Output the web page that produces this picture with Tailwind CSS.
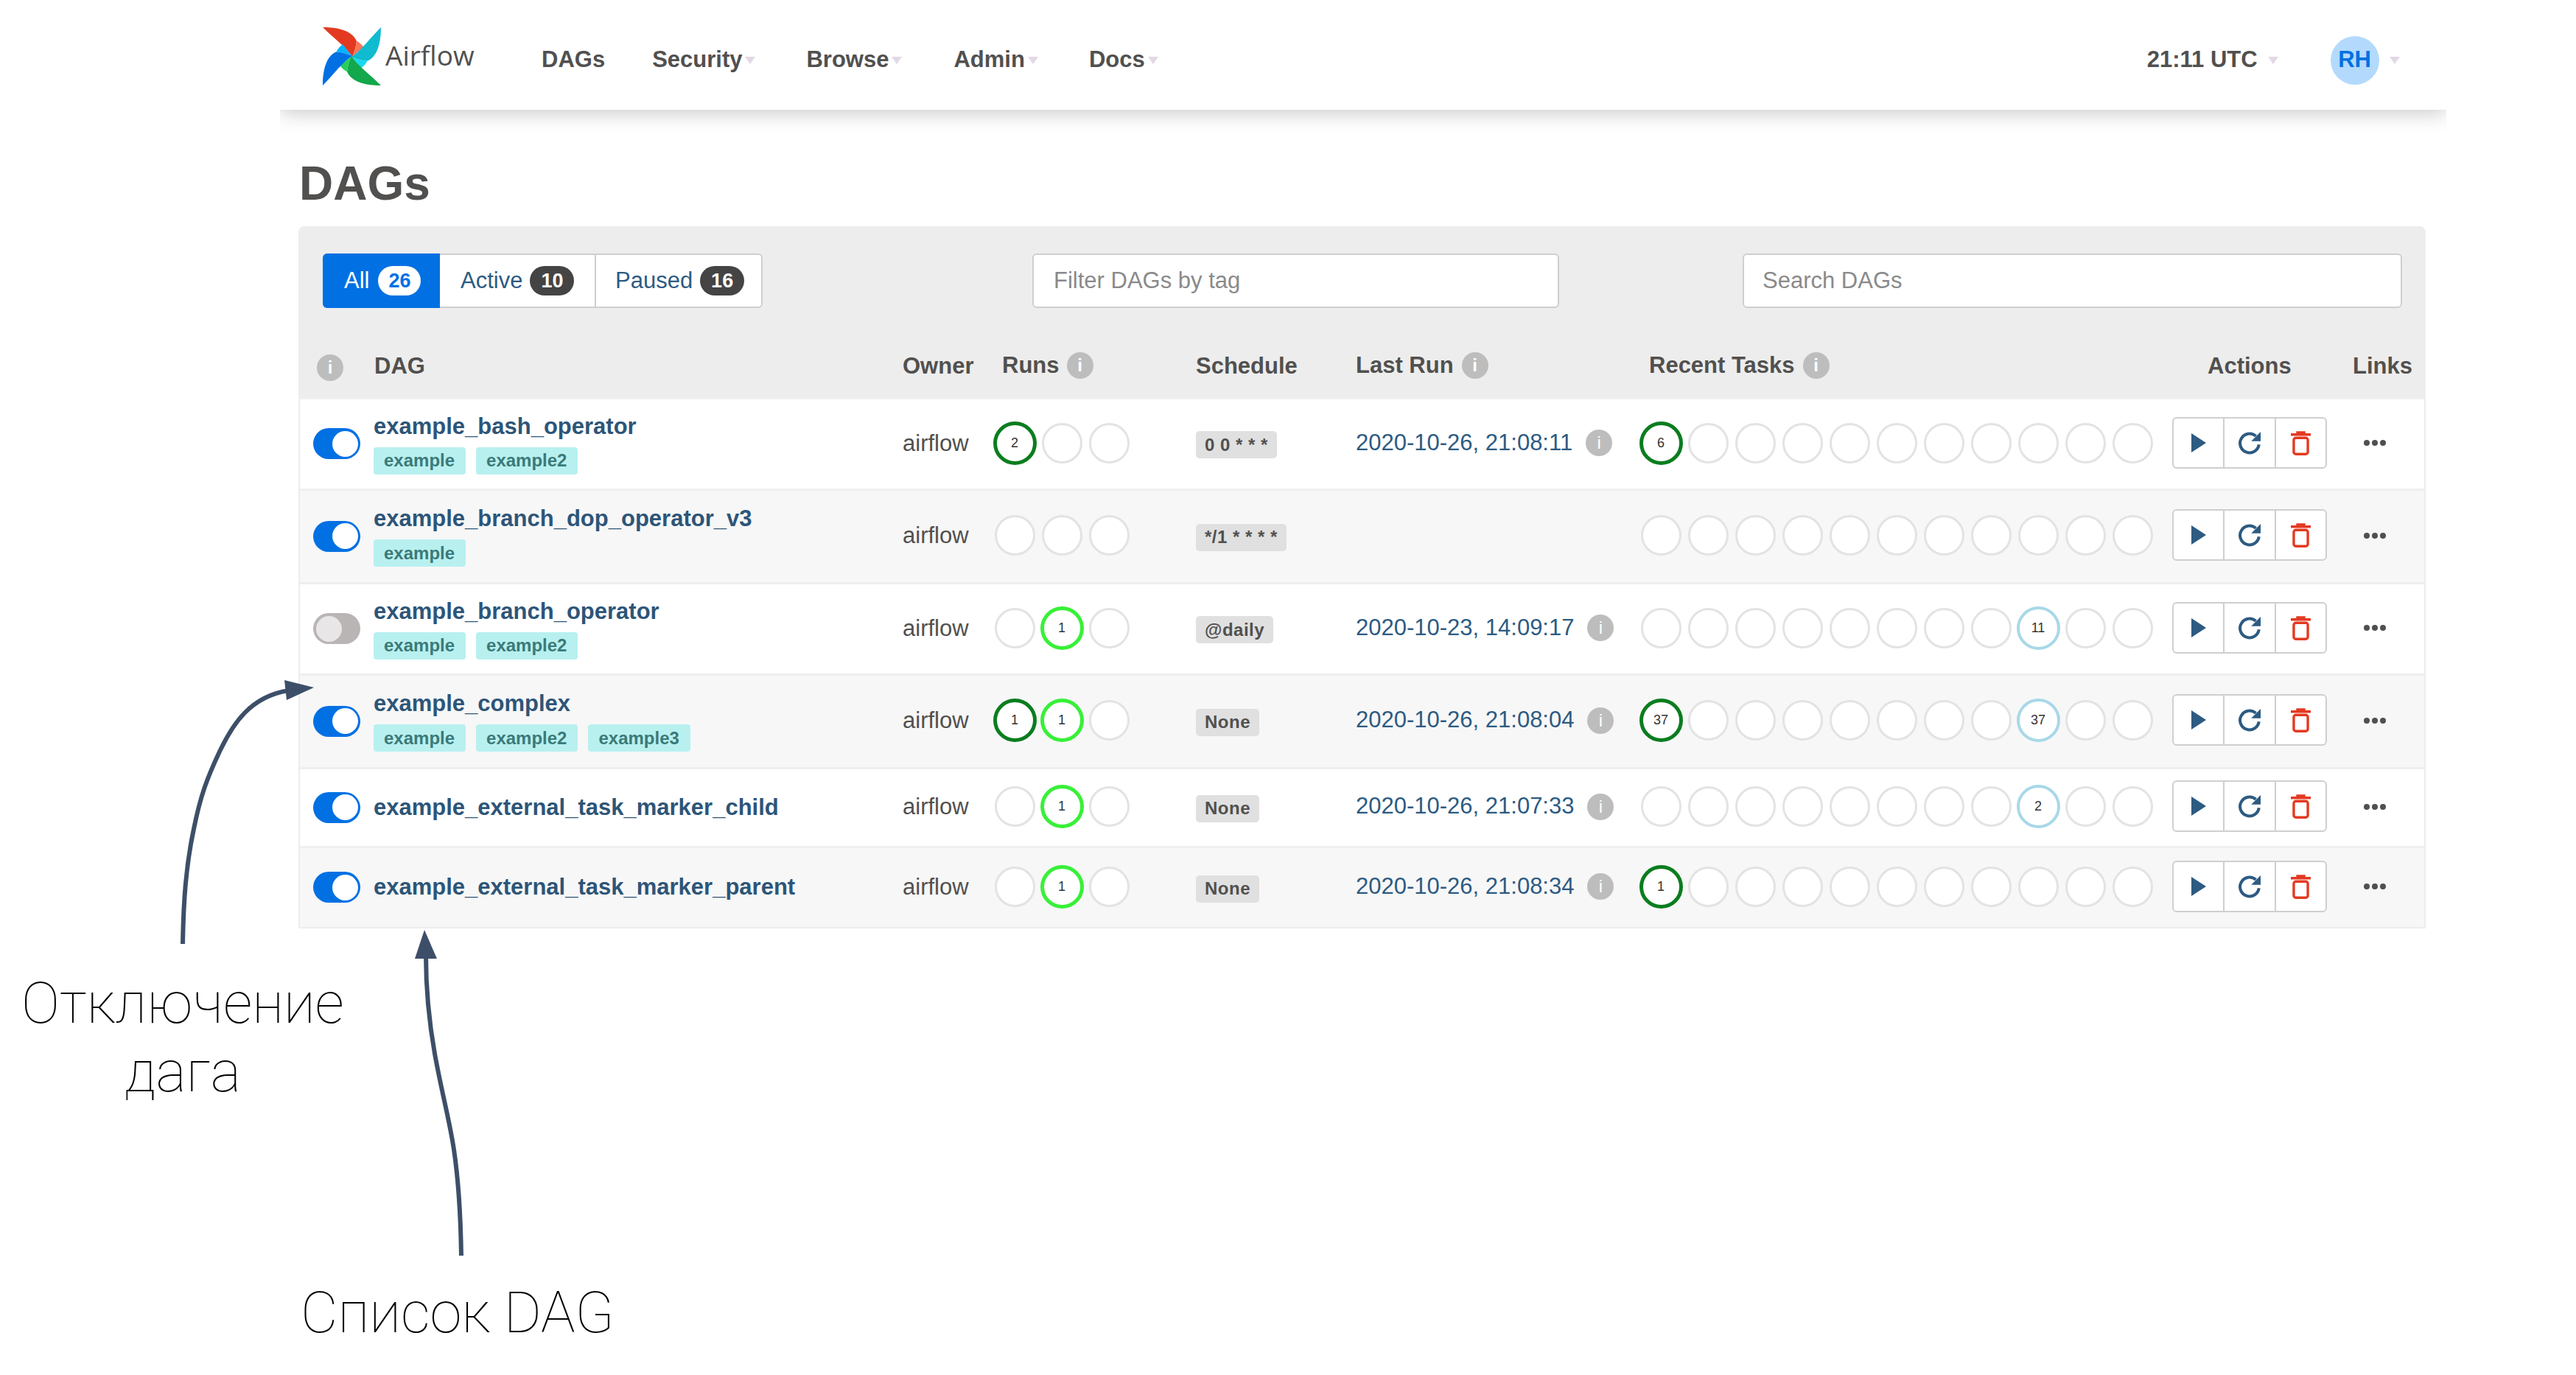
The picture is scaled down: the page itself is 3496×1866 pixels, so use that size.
<!DOCTYPE html>
<html lang="ru">
<head>
  <meta charset="UTF-8">
  <title>Airflow - DAGs</title>
  <script src="https://cdn.jsdelivr.net/npm/@tailwindcss/browser@4"></script>
</head>
<body class="relative bg-white w-[3496px] h-[1866px] overflow-hidden font-['Liberation_Sans',Arial,sans-serif] text-[#51504f]">
  <svg class="hidden">
    <symbol id="caret" viewBox="0 0 14 10"><polygon points="0,0 14,0 7,10" fill="#e3d8e6"/></symbol>
    <symbol id="play" viewBox="0 0 20 26"><polygon points="0,0 20,13 0,26" fill="#2d5b82"/></symbol>
    <symbol id="refresh" viewBox="0 0 24 24">
      <path d="M20.5 13.5a8.6 8.6 0 1 1-2.8-7.6" fill="none" stroke="#2d5b82" stroke-width="2.7"/>
      <polygon points="22,2 22,10.5 13.5,10.5" fill="#2d5b82"/>
    </symbol>
    <symbol id="trash" viewBox="0 0 24 30">
      <path d="M0 5h24M8 4.500V2.500h8v2" fill="none" stroke="#e43921" stroke-width="3"/>
      <rect x="3.500" y="9" width="17" height="19.500" rx="2.500" fill="none" stroke="#e43921" stroke-width="3"/>
    </symbol>
  </svg>

  <div class="ml-[380px] w-[2940px] h-[1300px] overflow-hidden">
    <nav class="h-[149px] pt-[14px] bg-white shadow-[0_4px_26px_rgba(0,0,0,0.22)] flex items-center text-[31px] font-bold text-[#51504f]">
      <a class="ml-[58px] flex items-center w-[297px]">
        <svg class="w-[79px] h-[79px] -mt-[10px]" viewBox="55 50 236 236">
          <g><path d="M55 50C120 50 175 65 192 105C190 130 183 150 175 170C150 130 100 95 55 50Z" fill="#e43921"/><path d="M192 105C205 112 215 122 222 132C205 143 188 155 175 170C183 150 190 130 192 105Z" fill="#ff7557"/></g>
          <g transform="rotate(90 173 168)"><path d="M55 50C120 50 175 65 192 105C190 130 183 150 175 170C150 130 100 95 55 50Z" fill="#11bbcf"/><path d="M192 105C205 112 215 122 222 132C205 143 188 155 175 170C183 150 190 130 192 105Z" fill="#14d9f0"/></g>
          <g transform="rotate(180 173 168)"><path d="M55 50C120 50 175 65 192 105C190 130 183 150 175 170C150 130 100 95 55 50Z" fill="#12a84b"/><path d="M192 105C205 112 215 122 222 132C205 143 188 155 175 170C183 150 190 130 192 105Z" fill="#25cf5d"/></g>
          <g transform="rotate(270 173 168)"><path d="M55 50C120 50 175 65 192 105C190 130 183 150 175 170C150 130 100 95 55 50Z" fill="#0170e3"/><path d="M192 105C205 112 215 122 222 132C205 143 188 155 175 170C183 150 190 130 192 105Z" fill="#00b4ff"/></g>
        </svg>
        <span class="ml-[6px] -mt-[14px] text-[37px] font-normal font-['Open_Sans',sans-serif]">Airflow</span>
      </a>
      <a>DAGs</a>
      <a class="ml-[64px]">Security</a><svg class="w-[14px] h-[10px] ml-[4px]"><use href="#caret"/></svg>
      <a class="ml-[69px]">Browse</a><svg class="w-[14px] h-[10px] ml-[4px]"><use href="#caret"/></svg>
      <a class="ml-[70px]">Admin</a><svg class="w-[14px] h-[10px] ml-[4px]"><use href="#caret"/></svg>
      <a class="ml-[69px]">Docs</a><svg class="w-[14px] h-[10px] ml-[4px]"><use href="#caret"/></svg>
      <a class="ml-[1342px]">21:11 UTC</a><svg class="w-[14px] h-[10px] ml-[14px]"><use href="#caret"/></svg>
      <span class="ml-[71px] w-[66px] h-[66px] rounded-full bg-[#b3dafc] text-[#0170e3] flex items-center justify-center">RH</span>
      <svg class="w-[14px] h-[10px] ml-[14px]"><use href="#caret"/></svg>
    </nav>

    <main class="pl-[25px]">
      <h1 class="h-[158px] pt-[62px] text-[64px] leading-[76px] font-bold text-[#51504f] pl-[1px]">DAGs</h1>

      <section class="w-[2887px] bg-[#ededed] rounded-t-[8px] px-[2px] pt-[37px] pb-[2px]">
        <div class="h-[74px] flex text-[31px]">
          <div class="ml-[31px] w-[597px] h-full flex rounded-[6px] border-[2px] border-[#cfcfcf] bg-white text-[#2d5b82]">
            <span class="-m-[2px] w-[159px] h-[74px] rounded-l-[6px] bg-[#0170e3] text-white flex items-center pl-[29px]">All<b class="ml-[12px] w-[58px] h-[40px] rounded-full bg-white text-[#0170e3] text-[27px] flex items-center justify-center">26</b></span>
            <span class="w-[214px] flex items-center pl-[30px] border-r-[2px] border-[#cfcfcf]">Active<b class="ml-[10px] w-[60px] h-[40px] rounded-full bg-[#444] text-white text-[27px] flex items-center justify-center">10</b></span>
            <span class="flex items-center pl-[26px]">Paused<b class="ml-[10px] w-[60px] h-[40px] rounded-full bg-[#444] text-white text-[27px] flex items-center justify-center">16</b></span>
          </div>
          <input class="ml-[366px] w-[715px] h-full rounded-[6px] border-[2px] border-[#cfcfcf] bg-white pl-[27px] placeholder:text-[#8a8a8a]" placeholder="Filter DAGs by tag">
          <input class="ml-[249px] w-[895px] h-full rounded-[6px] border-[2px] border-[#cfcfcf] bg-white pl-[25px] placeholder:text-[#8a8a8a]" placeholder="Search DAGs">
        </div>

        <table class="table-fixed w-[2883px] border-collapse text-[31px]">
          <colgroup>
            <col class="w-[99px]"><col class="w-[719px]"><col class="w-[120px]"><col class="w-[278px]"><col class="w-[217px]"><col class="w-[382px]"><col class="w-[726px]"><col class="w-[245px]"><col class="w-[97px]">
          </colgroup>
          <thead>
            <tr class="h-[122px] text-left font-bold text-[#51504f]">
              <th class="pl-[23px] pt-[37px]"><span class="inline-flex w-[36px] h-[36px] rounded-full bg-[#bdbdbd] text-white text-[24px] items-center justify-center">i</span></th>
              <th class="pt-[37px] pl-[2px]">DAG</th>
              <th class="pt-[37px]">Owner</th>
              <th class="pt-[37px] pl-[15px]"><span class="flex items-center -mt-[2px]">Runs<span class="ml-[10px] inline-flex w-[36px] h-[36px] rounded-full bg-[#bdbdbd] text-white text-[24px] items-center justify-center">i</span></span></th>
              <th class="pt-[37px]">Schedule</th>
              <th class="pt-[37px]"><span class="flex items-center -mt-[2px]">Last Run<span class="ml-[11px] inline-flex w-[36px] h-[36px] rounded-full bg-[#bdbdbd] text-white text-[24px] items-center justify-center">i</span></span></th>
              <th class="pt-[37px] pl-[16px]"><span class="flex items-center -mt-[2px]">Recent Tasks<span class="ml-[11px] inline-flex w-[36px] h-[36px] rounded-full bg-[#bdbdbd] text-white text-[24px] items-center justify-center">i</span></span></th>
              <th class="pt-[37px] pl-[48px]">Actions</th>
              <th class="pt-[37px]">Links</th>
            </tr>
          </thead>
          <tbody id="dag-rows"></tbody>
        </table>
      </section>
    </main>
  </div>

  <!-- annotations over the screenshot -->
  <svg class="absolute left-0 top-0 w-[3496px] h-[1866px] pointer-events-none" viewBox="0 0 3496 1866">
    <path d="M248 1281C249 1225 252 1176 263 1125C272 1080 281 1056 298 1020C316 982 340 945 392 937" fill="none" stroke="#3d4f68" stroke-width="6"/>
    <polygon points="426,933 386,923 389,950" fill="#3d4f68"/>
    <path d="M626 1704C625 1640 622 1600 616 1560C610 1520 600 1485 590 1430C582 1385 578 1345 578 1296" fill="none" stroke="#3d4f68" stroke-width="6"/>
    <polygon points="576,1262 563,1301 593,1301" fill="#3d4f68"/>
  </svg>
  <p class="absolute left-[0px] top-[1315px] w-[496px] text-center text-[78px] leading-[93px] font-thin font-['Roboto',sans-serif] text-black">Отключение<br>дага</p>
  <p class="absolute left-[408px] top-[1735px] text-[78px] leading-[93px] font-thin font-['Roboto',sans-serif] text-black">Список DAG</p>

<script>
  const RING = {
    e: 'w-[55px] h-[55px] border-[3px] border-[#e3e3e3] bg-white',
    g: 'w-[59px] h-[59px] border-[5px] border-[#0b7d1f] bg-white',
    l: 'w-[59px] h-[59px] border-[5px] border-[#38f038] bg-white',
    b: 'w-[59px] h-[59px] border-[4px] border-[#a8d8e8] bg-white'
  };

  const dags = [
    { name: 'example_bash_operator', tags: ['example', 'example2'], on: true, h: 'h-[124px]', runs: [['g', 2], ['e'], ['e']], cron: '0 0 * * *', last: '2020-10-26, 21:08:11', tasks: { 0: ['g', 6] } },
    { name: 'example_branch_dop_operator_v3', tags: ['example'], on: true, h: 'h-[127px]', runs: [['e'], ['e'], ['e']], cron: '*/1 * * * *', last: '', tasks: {} },
    { name: 'example_branch_operator', tags: ['example', 'example2'], on: false, h: 'h-[124px]', runs: [['e'], ['l', 1], ['e']], cron: '@daily', last: '2020-10-23, 14:09:17', tasks: { 8: ['b', 11] } },
    { name: 'example_complex', tags: ['example', 'example2', 'example3'], on: true, h: 'h-[127px]', runs: [['g', 1], ['l', 1], ['e']], cron: 'None', last: '2020-10-26, 21:08:04', tasks: { 0: ['g', 37], 8: ['b', 37] } },
    { name: 'example_external_task_marker_child', tags: [], on: true, h: 'h-[107px]', runs: [['e'], ['l', 1], ['e']], cron: 'None', last: '2020-10-26, 21:07:33', tasks: { 8: ['b', 2] } },
    { name: 'example_external_task_marker_parent', tags: [], on: true, h: 'h-[109px]', runs: [['e'], ['l', 1], ['e']], cron: 'None', last: '2020-10-26, 21:08:34', tasks: { 0: ['g', 1] } }
  ];

  function ring([kind, count]) {
    return `<span class="w-[64px] h-[60px] flex items-center justify-center shrink-0"><span class="${RING[kind]} rounded-full flex items-center justify-center text-[18px] text-[#333]">${count || ''}</span></span>`;
  }

  function row(d, i) {
    const toggle = d.on
      ? '<span class="w-[64px] h-[42px] rounded-full bg-[#0170e3] flex items-center justify-end pr-[3px]"><span class="w-[35px] h-[35px] rounded-full bg-white"></span></span>'
      : '<span class="w-[64px] h-[42px] rounded-full bg-[#bab5b5] flex items-center justify-start pl-[4px]"><span class="w-[35px] h-[35px] rounded-full bg-[#e8e6e6]"></span></span>';
    const tags = d.tags.map(t => `<span class="h-[37px] pl-[14px] pr-[15px] rounded-[4px] bg-[#b8f0f0] text-[#3b7a78] text-[24px] font-bold flex items-center">${t}</span>`).join('');
    const tasks = Array.from({ length: 11 }, (_, n) => ring(d.tasks[n] || ['e'])).join('');
    const lastRun = d.last
      ? `<span class="flex items-center text-[#2d5b82] -mt-[2px]">${d.last}<span class="ml-[18px] inline-flex w-[36px] h-[36px] rounded-full bg-[#bdbdbd] text-white text-[24px] items-center justify-center">i</span></span>`
      : '';
    return `<tr class="${d.h} border-t-[3px] border-[#efefef] ${i % 2 ? 'bg-[#f7f7f7]' : 'bg-white'}">
      <td class="pl-[18px]">${toggle}</td>
      <td><div class="flex flex-col gap-[10px] pl-[1px]"><a class="font-bold text-[#2d5578] leading-[36px]">${d.name}</a>${tags ? `<div class="flex gap-[14px]">${tags}</div>` : ''}</div></td>
      <td class="text-[#51504f]">airflow</td>
      <td><div class="flex -mt-[2px]">${d.runs.map(ring).join('')}</div></td>
      <td><span class="inline-flex items-center h-[37px] px-[12px] rounded-[5px] bg-[#e0e0e0] text-[#51504f] text-[24px] font-bold tracking-[0.5px]">${d.cron}</span></td>
      <td>${lastRun}</td>
      <td><div class="flex -mt-[2px]">${tasks}</div></td>
      <td><div class="w-[210px] h-[70px] flex rounded-[6px] border-[2px] border-[#cfcfcf] bg-white -mt-[3px]">
        <span class="flex-1 flex items-center justify-center border-r-[2px] border-[#cfcfcf]"><svg class="w-[20px] h-[26px]"><use href="#play"/></svg></span>
        <span class="flex-1 flex items-center justify-center border-r-[2px] border-[#cfcfcf]"><svg class="w-[36px] h-[36px]"><use href="#refresh"/></svg></span>
        <span class="flex-1 flex items-center justify-center"><svg class="w-[27px] h-[34px]"><use href="#trash"/></svg></span>
      </div></td>
      <td><span class="ml-[15px] flex gap-[3px] -mt-[2px]"><i class="w-[8px] h-[8px] rounded-full bg-[#51504f]"></i><i class="w-[8px] h-[8px] rounded-full bg-[#51504f]"></i><i class="w-[8px] h-[8px] rounded-full bg-[#51504f]"></i></span></td>
    </tr>`;
  }

  document.getElementById('dag-rows').innerHTML = dags.map(row).join('');
</script>
</body>
</html>
